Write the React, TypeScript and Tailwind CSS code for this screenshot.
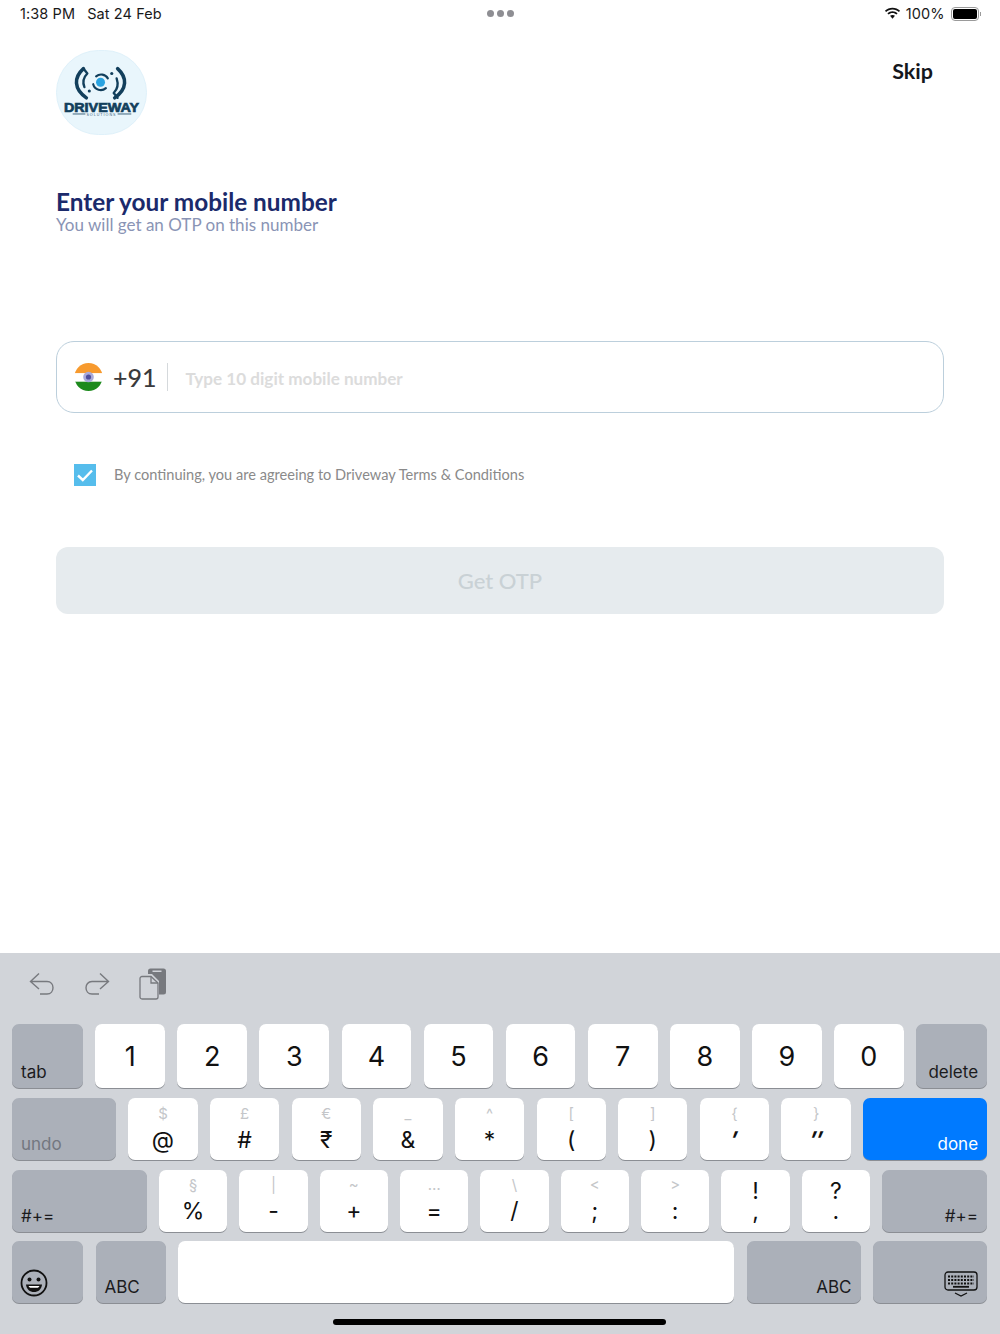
const kbFont = "font-['Inter','Liberation_Sans',sans-serif]";

type Sym = { main: string; sub?: string };

const row2: Sym[] = [
  { main: "@", sub: "$" },
  { main: "#", sub: "£" },
  { main: "₹", sub: "€" },
  { main: "&", sub: "_" },
  { main: "*", sub: "^" },
  { main: "(", sub: "[" },
  { main: ")", sub: "]" },
  { main: "′", sub: "{" },
  { main: "″", sub: "}" },
];

const row3: Sym[] = [
  { main: "%", sub: "§" },
  { main: "-", sub: "|" },
  { main: "+", sub: "~" },
  { main: "=", sub: "…" },
  { main: "/", sub: "\\" },
  { main: ";", sub: "<" },
  { main: ":", sub: ">" },
  { main: ",", sub: "!" },
  { main: ".", sub: "?" },
];

function SymKey({ main, sub, top }: Sym & { top: string }) {
  // the last two keys of row 3 have a dark upper symbol
  const darkSub = sub === "!" || sub === "?";
  const slanted = main === "′" || main === "″";
  return (
    <div className={`flex-1 h-full bg-white rounded-[7px] shadow-[0_1px_0_#8b8e94] flex flex-col items-center ${top}`}>
      <span className={`h-[21px] leading-[21px] ${darkSub ? "text-[23px] text-[#111] mt-[7px]" : "text-[15px] text-[#c4c6c9]"}`}>{sub}</span>
      <span className={`leading-[26px] text-[#111] text-[23px] ${darkSub ? "-mt-[4px]" : "mt-[3px]"} ${slanted ? "inline-block font-bold skew-x-[-14deg]" : ""}`}>{main}</span>
    </div>
  );
}

function GrayKey({ label, className, align = "left", muted }: { label?: string; className: string; align?: "left" | "right"; muted?: boolean }) {
  return (
    <div className={`h-full bg-[#abb0b9] rounded-[7px] shadow-[0_1px_0_#8b8e94] flex items-end pb-[5px] px-[9px] ${align === "right" ? "justify-end" : ""} ${className}`}>
      <span className={`text-[17px] leading-[22px] ${muted ? "text-[#737780]" : "text-[#1b1b1d]"}`}>{label}</span>
    </div>
  );
}

function Logo() {
  return (
    <div className="w-[91px] h-[85px] rounded-full bg-[#e9f6fc] border border-[#dff1fa]">
      <svg viewBox="0 0 91 85" className="w-full h-full">
        <g fill="none" stroke="#123f5c" strokeWidth="3.6" strokeLinecap="round" strokeLinejoin="round">
          <path d="M27 18 C17 27 17 39 30 48" />
          <path d="M27 18 L31 23 C27 27 26 32 28 37" strokeWidth="2.4" />
          <path d="M62 18 C72 27 72 39 59 48" />
          <path d="M62 48 L58 43 C62 39 63 34 61 28" strokeWidth="2.4" />
          <path d="M40 26 A8 8 0 0 1 52 28 M50 38 A8 8 0 0 1 37 34" strokeWidth="2.2" />
        </g>
        <circle cx="44.500" cy="32" r="4.600" fill="#2aa3e0" />
        <circle cx="33" cy="41" r="1.600" fill="#123f5c" />
        <circle cx="56" cy="23" r="1.600" fill="#123f5c" />
        <text x="45.500" y="62" textAnchor="middle" fontFamily="'Liberation Sans', sans-serif" fontWeight="700" fontSize="13.500" textLength="77" lengthAdjust="spacingAndGlyphs" fill="#123f5c" stroke="#123f5c" strokeWidth="0.700">DRIVEWAY</text>
        <text x="45.500" y="66.500" textAnchor="middle" fontFamily="'Liberation Sans', sans-serif" fontSize="3.800" letterSpacing="1" fill="#3b6179">SOLUTIONS</text>
        <path d="M16 64.500 H29 M62 64.500 H76" stroke="#3b6179" strokeWidth="1" />
      </svg>
    </div>
  );
}

function Flag() {
  return (
    <svg viewBox="0 0 28 28" className="w-[29px] h-[28px]">
      <defs>
        <clipPath id="flag">
          <circle cx="14" cy="14" r="14" />
        </clipPath>
      </defs>
      <g clipPath="url(#flag)">
        <rect width="28" height="10.300" fill="#f79a2e" />
        <rect y="10.300" width="28" height="8.400" fill="#fff" />
        <rect y="18.700" width="28" height="9.300" fill="#1d8a1d" />
      </g>
      <circle cx="14" cy="14" r="5.300" fill="#a9aadb" />
      <circle cx="14" cy="14" r="2.600" fill="#4f4f9e" />
    </svg>
  );
}

export default function App() {
  return (
    <div className="w-[1000px] h-[1334px] bg-white flex flex-col overflow-hidden font-['Lato',sans-serif]">
      {/* status bar */}
      <div className={`h-[27px] shrink-0 flex items-center justify-between pl-[20px] pr-[19px] text-[14.500px] tracking-[0.1px] text-[#1a1a1a] ${kbFont}`}>
        <div className="flex gap-[12px] w-[300px]">
          <span>1:38 PM</span>
          <span>Sat 24 Feb</span>
        </div>
        <div className="flex gap-[3px]">
          <span className="w-[7px] h-[7px] rounded-full bg-[#8e8e93]" />
          <span className="w-[7px] h-[7px] rounded-full bg-[#8e8e93]" />
          <span className="w-[7px] h-[7px] rounded-full bg-[#8e8e93]" />
        </div>
        <div className="flex items-center justify-end gap-[5px] w-[300px]">
          <svg viewBox="0 0 18 13" className="w-[17px] h-[13px]" fill="#111">
            <path d="M9 2.200c2.600 0 5 1 6.800 2.700l1.200-1.300C14.900 1.600 12.100.400 9 .400S3.100 1.600 1 3.600l1.200 1.300C4 3.200 6.400 2.200 9 2.200z" />
            <path d="M9 6c1.600 0 3 .600 4.200 1.600l1.200-1.300C12.900 5 11 4.200 9 4.200S5.100 5 3.600 6.300l1.200 1.300C6 6.600 7.400 6 9 6z" />
            <path d="M9 8c-1 0-1.900.400-2.600 1L9 12l2.600-3C10.900 8.400 10 8 9 8z" />
          </svg>
          <span>100%</span>
          <div className="flex items-center ml-[1px]">
            <div className="w-[28px] h-[14px] rounded-[4px] border border-[#9a9a9a] p-[1px]">
              <div className="w-full h-full rounded-[2px] bg-black" />
            </div>
            <div className="w-[1.500px] h-[4px] bg-[#9a9a9a] ml-[1px]" />
          </div>
        </div>
      </div>

      {/* page */}
      <div className="flex-1 px-[56px]">
        <div className="flex justify-between items-start pt-[23px]">
          <Logo />
          <span className="text-[21.500px] font-bold text-[#15171c] mr-[11px] mt-[6px] leading-[30px]">Skip</span>
        </div>

        <h1 className="mt-[53px] text-[24.350px] leading-[28px] font-bold text-[#1b2a6b]">Enter your mobile number</h1>
        <p className="text-[17.050px] leading-[18px] text-[#8a94b5]">You will get an OTP on this number</p>

        <div className="mt-[107px] h-[72px] rounded-[18px] border border-[#bccfdc] flex items-center pl-[17px]">
          <Flag />
          <span className="ml-[10px] mt-[1px] text-[25px] text-[#3a3a3c] font-medium">+91</span>
          <span className="ml-[10px] w-px h-[28px] bg-[#d5d9dc]" />
          <span className="ml-[18px] mt-[3px] text-[17.100px] font-bold text-[#dcdcdc]">Type 10 digit mobile number</span>
        </div>

        <div className="mt-[51px] flex items-center pl-[18px]">
          <div className="w-[22px] h-[22px] bg-[#56bdec] flex items-center justify-center">
            <svg viewBox="0 0 22 22" className="w-[22px] h-[22px]" fill="none" stroke="#fff" strokeWidth="2.400">
              <path d="M4 11.500l4.800 4.500L18 6.500" />
            </svg>
          </div>
          <span className="ml-[18px] text-[14.600px] text-[#8a8a8a]">By continuing, you are agreeing to Driveway Terms &amp; Conditions</span>
        </div>

        <div className="mt-[61px] h-[67px] rounded-[12px] bg-[#e6ebee] flex items-center justify-center">
          <span className="text-[22px] font-medium text-[#c9d1d5]">Get OTP</span>
        </div>
      </div>

      {/* keyboard */}
      <div className={`h-[381px] shrink-0 bg-[#d1d4d9] pl-[12px] pr-[13px] ${kbFont}`}>
        <div className="h-[71px] flex items-center pl-[17px] pb-[10px] gap-[29px]">
          <svg viewBox="0 0 26 24" className="w-[26px] h-[24px]" fill="none" stroke="#77797e" strokeWidth="1.400">
            <path d="M10 1.500L1.500 9.500l8.500 7.500M1.500 9.500H18c8 0 8 12.500 0 12.500h-7" />
          </svg>
          <svg viewBox="0 0 26 24" className="w-[26px] h-[24px]" fill="none" stroke="#77797e" strokeWidth="1.400">
            <path d="M16 1.500l8.500 8-8.500 7.500M24.500 9.500H8c-8 0-8 12.500 0 12.500h7" />
          </svg>
          <svg viewBox="0 0 28 32" className="w-[28px] h-[32px]">
            <path d="M9 3a2.500 2.500 0 0 1 2.500-2.500h13A2.500 2.500 0 0 1 27 3v21a2.500 2.500 0 0 1-2.500 2.500H20V13l-7-7H9z" fill="#77797e" />
            <rect x="13.500" y="2.500" width="9" height="1.500" fill="#d1d4d9" />
            <path d="M3 8.500h9l7 6.500v14a2 2 0 0 1-2 2H3a2 2 0 0 1-2-2v-18.500a2 2 0 0 1 2-2z" fill="#d1d4d9" stroke="#77797e" strokeWidth="1.300" />
            <path d="M12 8.500V15h7" fill="none" stroke="#77797e" strokeWidth="1.300" />
          </svg>
        </div>

        <div className="flex flex-col">
          <div className="h-[64px] flex gap-[12.300px]">
            <GrayKey label="tab" className="w-[71px]" />
            {["1", "2", "3", "4", "5", "6", "7", "8", "9", "0"].map((n) => (
              <div key={n} className="flex-1 bg-white rounded-[7px] shadow-[0_1px_0_#8b8e94] flex items-center justify-center text-[27px] text-[#111] pt-[2px]">
                {n}
              </div>
            ))}
            <GrayKey label="delete" className="w-[71px]" align="right" />
          </div>

          <div className="mt-[10px] h-[62px] flex gap-[12.300px]">
            <GrayKey label="undo" className="w-[104px]" muted />
            {row2.map((k) => (
              <SymKey key={k.main} {...k} top="pt-[5px]" />
            ))}
            <div className="h-full w-[124px] bg-[#007aff] rounded-[7px] shadow-[0_1px_0_#8b8e94] flex items-end justify-end pb-[5px] px-[9px]">
              <span className="text-[17px] leading-[22px] text-white">done</span>
            </div>
          </div>

          <div className="mt-[10px] h-[62px] flex gap-[12px]">
            <GrayKey label="#+=" className="w-[135px]" />
            {row3.map((k) => (
              <SymKey key={k.main} {...k} top="pt-[4px]" />
            ))}
            <GrayKey label="#+=" className="w-[105px]" align="right" />
          </div>

          <div className="mt-[9px] h-[62px] flex gap-[12.500px]">
            <div className="w-[71px] h-full bg-[#abb0b9] rounded-[7px] shadow-[0_1px_0_#8b8e94] flex items-end pl-[8px] pb-[6px]">
              <svg viewBox="0 0 28 28" className="w-[28px] h-[28px]" fill="none" stroke="#111" strokeWidth="1.800">
                <circle cx="14" cy="14" r="12.500" />
                <circle cx="9.500" cy="10.500" r="2" fill="#111" stroke="none" />
                <circle cx="18.500" cy="10.500" r="2" fill="#111" stroke="none" />
                <path d="M6 15.500h16c-.500 5-4 7.500-8 7.500s-7.500-2.500-8-7.500z" fill="#111" stroke="none" />
                <path d="M8.500 17h11c-.600 1-1.200 1.500-1.800 1.800h-7.400c-.600-.300-1.300-.800-1.800-1.800z" fill="#fff" stroke="none" />
              </svg>
            </div>
            <GrayKey label="ABC" className="w-[70px]" />
            <div className="flex-1 h-full bg-white rounded-[7px] shadow-[0_1px_0_#8b8e94]" />
            <GrayKey label="ABC" className="w-[114px]" align="right" />
            <div className="w-[114px] h-full bg-[#abb0b9] rounded-[7px] shadow-[0_1px_0_#8b8e94] flex items-end justify-end pr-[9px] pb-[6px]">
              <svg viewBox="0 0 34 26" className="w-[34px] h-[26px]" fill="none" stroke="#111" strokeWidth="1.300">
                <rect x="1" y="1" width="32" height="18" rx="3" />
                <path d="M4 5.500h26M4 9h26" strokeWidth="2" strokeDasharray="2 1.200" />
                <path d="M4 12.500h26" strokeWidth="2" strokeDasharray="2 1.200" />
                <path d="M9 15.800h16" strokeWidth="1.800" />
                <path d="M11 22l6 3 6-3" />
              </svg>
            </div>
          </div>
        </div>

        <div className="flex justify-center mt-[16px] -ml-[1px]">
          <div className="w-[333px] h-[6px] rounded-full bg-black" />
        </div>
      </div>
    </div>
  );
}
